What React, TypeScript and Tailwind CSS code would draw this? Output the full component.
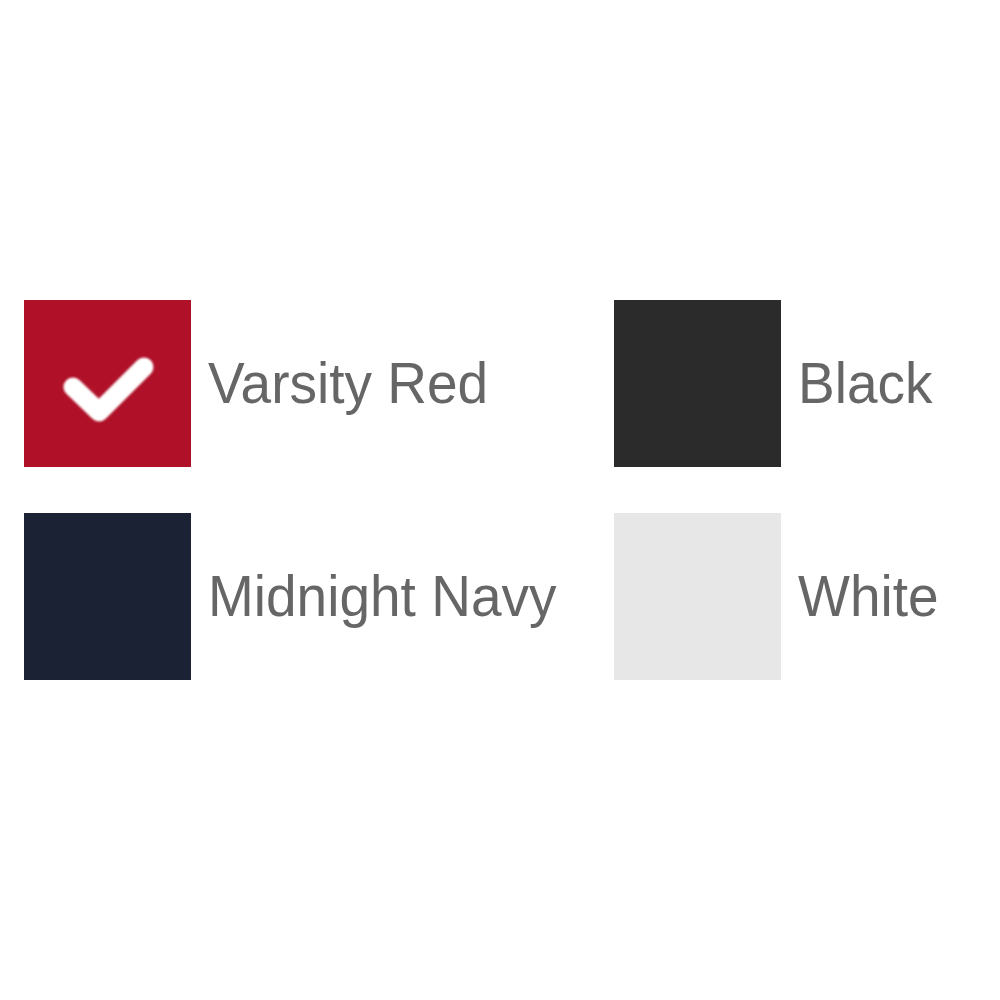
const swatches = [
  { name: "Varsity Red", color: "bg-[#b01129]", checked: true },
  { name: "Black", color: "bg-[#2b2b2c]", checked: false },
  { name: "Midnight Navy", color: "bg-[#1b2234]", checked: false },
  { name: "White", color: "bg-[#e7e7e7]", checked: false },
];

function Check() {
  return (
    <svg width="167" height="167" viewBox="0 0 167 167" className="blur-[1px]">
      <polyline
        points="49,87 75,112 120,67"
        fill="none"
        stroke="#ffffff"
        strokeWidth="19"
        strokeLinecap="round"
        strokeLinejoin="round"
      />
    </svg>
  );
}

export default function App() {
  return (
    <div className="min-h-screen bg-white pt-[300px] pl-[24px] font-['Liberation_Sans',Arial,sans-serif]">
      <div className="grid grid-cols-[590px_auto] gap-y-[46px]">
        {swatches.map((s) => (
          <div key={s.name} className="flex items-center gap-[17px]">
            <div className={`w-[167px] h-[167px] shrink-0 ${s.color}`}>
              {s.checked && <Check />}
            </div>
            <span className="text-[55px] leading-none text-[#666666] scale-y-[1.06]">
              {s.name}
            </span>
          </div>
        ))}
      </div>
    </div>
  );
}
